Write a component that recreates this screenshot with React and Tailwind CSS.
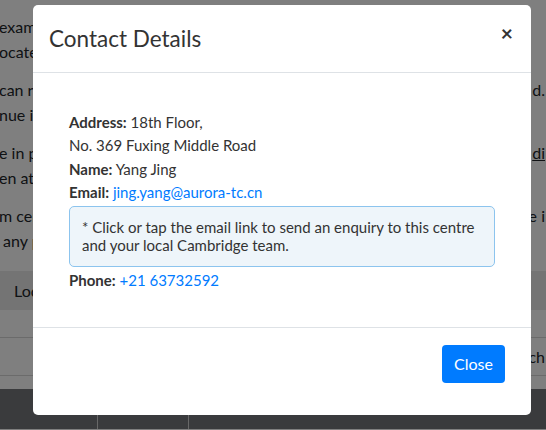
import React from 'react';

const pageLines = [
  { left: 'exams', right: '' },
  { left: 'ocated', right: '' },
  { left: 'can run', right: 'd.' },
  { left: 'nue is', right: '' },
  { left: 'e in p', right: 'di', link: true },
  { left: 'en at a', right: '' },
  { left: 'm cen', right: 'e i' },
  { left: '\u00a0any p', right: '' },
];

const PageBehind = () => (
  <div className="text-[16px] leading-[25px] text-[#212529]">
    <div className="pt-[14px] space-y-[13px]">
      {[0, 2, 4, 6].map((i) => (
        <div key={i}>
          {[pageLines[i], pageLines[i + 1]].map((line, j) => (
            <div key={j} className="flex justify-between">
              <span className="-ml-[1px]">{line.left}</span>
              {line.right && (
                <span className={`pr-[1px] whitespace-nowrap ${line.link ? 'underline' : ''}`}>{line.right}</span>
              )}
            </div>
          ))}
        </div>
      ))}
    </div>
    <div className="mt-[18px]">
      <div className="h-[39px] bg-[#e8e8e8] flex items-center pl-[14px]">Location</div>
      <div className="h-[28px] border-b border-[#d6d6d6]"></div>
      <div className="h-[38px] border-b border-[#d6d6d6] flex items-center justify-end">
        <span className="pr-[1px] whitespace-nowrap">ch</span>
      </div>
      <div className="h-[13px]"></div>
      <div className="h-[40px] bg-[#74767a] flex">
        <div className="w-[98px] border-r border-[#d0d0d0]"></div>
        <div className="w-[91px] border-r border-[#d0d0d0]"></div>
      </div>
    </div>
  </div>
);

const App = () => {
  return (
    <div className="relative w-[546px] h-[430px] overflow-hidden bg-white font-['Lato',sans-serif]">
      <PageBehind />
      <div className="absolute inset-0 bg-black/50"></div>

      <div className="absolute left-[33px] top-[5px] w-[498px] h-[410px] bg-white rounded-[5px] flex flex-col text-[#333]">
        <div className="h-[68px] border-b border-[#dee2e6] flex items-center justify-between pl-[16px] pr-[18px]">
          <h5 className="text-[22.5px] leading-none text-[#333] pt-[1px]">Contact Details</h5>
          <button className="self-start mt-[17px] text-[21px] font-bold leading-none text-[#333]">×</button>
        </div>

        <div className="flex-1 px-[36px] pt-[38px] text-[15px]">
          <div className="leading-[23.4px]">
            <div><span className="font-bold">Address:</span> 18th Floor,</div>
            <div>No. 369 Fuxing Middle Road</div>
            <div><span className="font-bold">Name:</span> Yang Jing</div>
            <div><span className="font-bold">Email:</span> <a className="text-[#007bff]">jing.yang@aurora-tc.cn</a></div>
          </div>
          <div className="mt-[1px] w-[426px] border border-[#8cc4ee] bg-[#eef5fa] rounded-[5px] px-[12px] py-[11px] leading-[18.5px] whitespace-nowrap">
            * Click or tap the email link to send an enquiry to this centre<br />
            and your local Cambridge team.
          </div>
          <div className="mt-[2px] leading-[23.4px]">
            <span className="font-bold">Phone:</span> <a className="text-[#007bff]">+21 63732592</a>
          </div>
        </div>

        <div className="h-[88px] border-t border-[#dee2e6] flex items-start justify-end pt-[17px] pr-[26px]">
          <button className="h-[38px] w-[63px] rounded-[4px] bg-[#007bff] text-white text-[16px]">Close</button>
        </div>
      </div>
    </div>
  );
};

export default App;
